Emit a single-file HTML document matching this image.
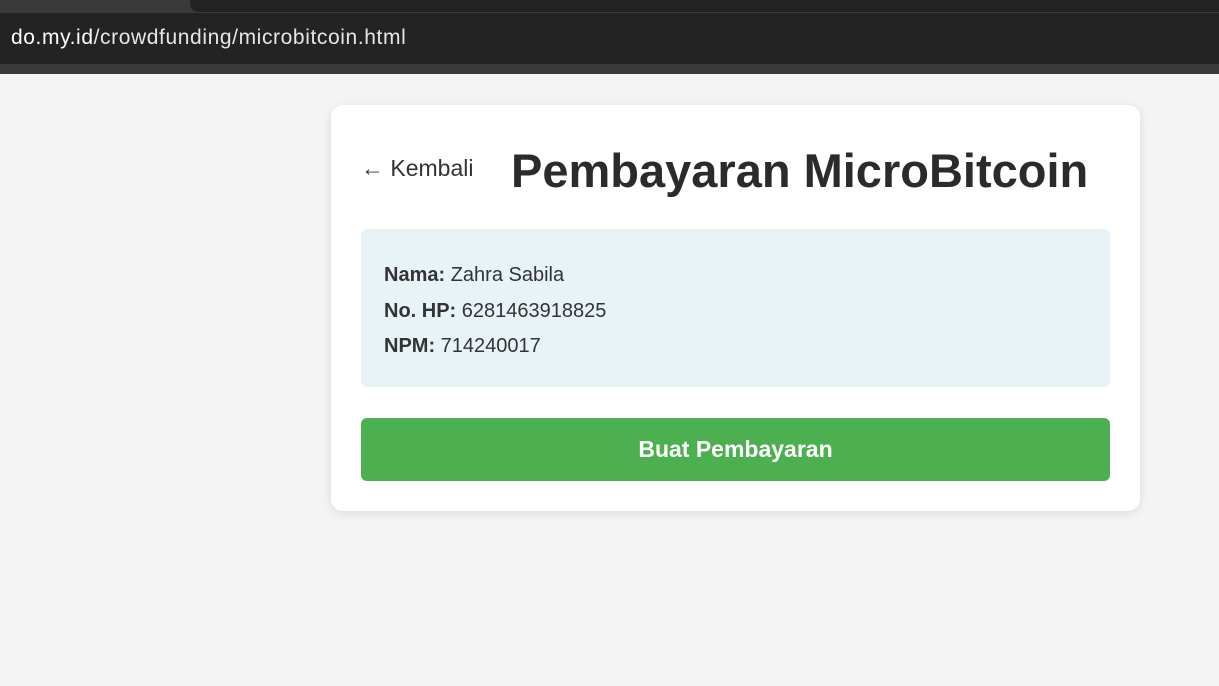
<!DOCTYPE html>
<html><head><style>
body{margin:0;width:1219px;height:686px;background:#f4f4f4;font-family:"Liberation Sans",sans-serif;overflow:hidden;position:relative}
.top{position:absolute;left:0;top:0;width:1219px;height:74px;background:#3a3a3a}
.tab{position:absolute;left:190px;top:0;width:1029px;height:12px;background:#232323;border-bottom-left-radius:8px}
.addr{position:absolute;left:0;top:13px;width:1219px;height:51px;background:#232323}
.url{position:absolute;left:11px;top:26px;font-size:21px;color:#e6e6e6;letter-spacing:0.6px}
.url span{color:#fff}
.card{position:absolute;left:331px;top:105px;width:809px;height:406px;background:#fff;border-radius:12px;box-shadow:0 2px 10px rgba(0,0,0,0.1)}
.back{position:absolute;left:30px;top:50px;font-size:23px;color:#333}
h1{position:absolute;left:180px;top:38px;margin:0;font-size:47px;font-weight:bold;color:#2b2b2b;white-space:nowrap}
.info{position:absolute;left:30px;top:124px;width:749px;height:158px;background:#e8f3f8;border-radius:6px}
.info p{position:absolute;left:23px;margin:0;font-size:20px;color:#333}
.btn{position:absolute;left:30px;top:313px;width:749px;height:63px;background:#4caf50;border-radius:6px;color:#fff;font-weight:bold;font-size:23px;text-align:center;line-height:63px}
</style></head><body>
<div class="top"><div class="tab"></div><div class="addr"></div><div class="url"><span>do.my.id</span>/crowdfunding/microbitcoin.html</div></div>
<div class="card">
<div class="back">← Kembali</div>
<h1>Pembayaran MicroBitcoin</h1>
<div class="info">
<p style="top:35px"><b>Nama:</b> Zahra Sabila</p>
<p style="top:71px"><b>No. HP:</b> 6281463918825</p>
<p style="top:106px"><b>NPM:</b> 714240017</p>
</div>
<div class="btn">Buat Pembayaran</div>
</div>
</body></html>
